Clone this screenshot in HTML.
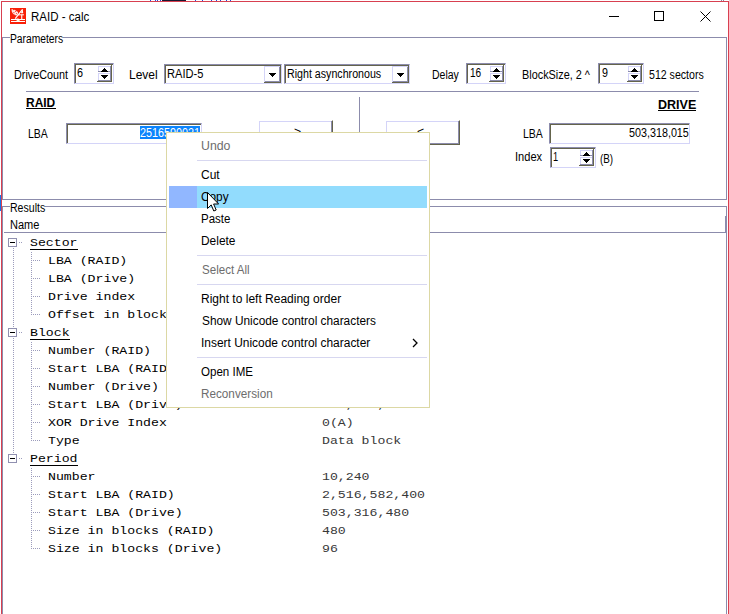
<!DOCTYPE html>
<html><head><meta charset="utf-8"><title>RAID - calc</title>
<style>
html,body{margin:0;padding:0;background:#fff;}
body{width:729px;height:614px;position:relative;overflow:hidden;font-family:"Liberation Sans",sans-serif;}
.abs{position:absolute;}
.ln{position:absolute;background:#8c8cac;}
.t{position:absolute;white-space:nowrap;font:12px/14px "Liberation Sans",sans-serif;color:#000;transform-origin:0 0;}
.sunk{position:absolute;background:#fff;border:1px solid;border-color:#8c8cac #d4d4f8 #d4d4f8 #8c8cac;box-shadow:inset 1px 1px 0 #64644c;}
.btn{position:absolute;background:#fff;border:1px solid;border-color:#d4d4f8 #64644c #64644c #d4d4f8;}
.pbtn{position:absolute;background:#fff;border:1px solid;border-color:#fff #64644c #64644c #fff;box-shadow:inset -1px -1px 0 #8c8cac, inset 1px 1px 0 #d4d4f8;width:73px;height:23px;}
.ttl{position:absolute;font:12px/16px "Liberation Sans",sans-serif;color:#000;white-space:nowrap;}
.m{position:absolute;transform-origin:0 0;font:12px/22px "Liberation Sans",sans-serif;color:#000;white-space:nowrap;height:22px;}
.m.d{color:#6d6d6d;}
.ms{position:absolute;left:197px;width:230px;height:1px;background:#d7d7f0;}
.tr{position:absolute;font:11.5px/18px "Liberation Mono",monospace;color:#000;white-space:pre;height:18px;transform:scaleX(1.148);transform-origin:0 0;}
.tv{position:absolute;left:322px;font:11.5px/18px "Liberation Mono",monospace;color:#383838;white-space:pre;height:18px;transform:scaleX(1.148);transform-origin:0 0;}
</style></head><body>

<div class="abs" style="left:1px;top:1px;width:728px;height:620px;border:1px solid #d84050;box-sizing:border-box;border-bottom:none"></div>
<div class="abs" style="left:0;top:195px;width:1px;height:16px;background:#1874e8"></div>
<div class="abs" style="left:162px;top:0;width:24px;height:1px;background:#181830"></div>
<div class="abs" style="left:150px;top:0;width:1px;height:1px;background:#2848d8"></div>
<div class="abs" style="left:155px;top:0;width:1px;height:1px;background:#2848d8"></div>
<div class="abs" style="left:157px;top:0;width:1px;height:1px;background:#2848d8"></div>
<div class="abs" style="left:160px;top:0;width:1px;height:1px;background:#2848d8"></div>
<div class="abs" style="left:195px;top:0;width:1px;height:1px;background:#2848d8"></div>
<div class="abs" style="left:202px;top:0;width:1px;height:1px;background:#2848d8"></div>
<div class="abs" style="left:211px;top:0;width:1px;height:1px;background:#2848d8"></div>
<div class="abs" style="left:216px;top:0;width:1px;height:1px;background:#2848d8"></div>
<div class="abs" style="left:220px;top:0;width:1px;height:1px;background:#2848d8"></div>
<div class="abs" style="left:226px;top:0;width:1px;height:1px;background:#2848d8"></div>
<div class="abs" style="left:230px;top:0;width:1px;height:1px;background:#2848d8"></div>
<div class="abs" style="left:721px;top:0;width:1px;height:1px;background:#8888a0"></div>
<div class="abs" style="left:723px;top:0;width:1px;height:1px;background:#8888a0"></div>
<svg class="abs" style="left:10px;top:8px" width="16" height="16" viewBox="0 0 16 16">
<rect width="16" height="16" fill="#f82008"/>
<g fill="#fff">
<rect x="1" y="11" width="14" height="1"/>
<rect x="1" y="13" width="14" height="1"/>
<path d="M6 11.6h4.2l-1 1.7h-2.2z" fill="#fffbe0"/>
<ellipse cx="7.6" cy="11.2" rx="1.7" ry="0.8"/>
<rect x="11.2" y="6.8" width="1.1" height="4.4"/>
<rect x="8" y="6.3" width="5.9" height="1"/>
<path d="M12.7 1.2l-1.9 4h2.4z"/>
<path d="M1.4 1.2h1.7v1l1.6-.4l1.7 1.1l1.6 1.2v2l-1.4 1.3l-2.1-.3l-1.6-1.6l-1-1.6z" opacity=".88"/>
</g>
<path d="M5.2 10.6L12.6 1.4" stroke="#fff" stroke-width="1.2" fill="none"/>
<g fill="#f82008"><circle cx="3.9" cy="4.6" r=".55"/><circle cx="5.6" cy="3.4" r=".5"/><circle cx="6.6" cy="5.6" r=".5"/><circle cx="10.6" cy="5.6" r=".55"/><circle cx="4.6" cy="6.2" r=".4"/></g>
</svg>
<div class="ttl" style="left:31.09px;top:9px;transform-origin:0 0;transform:scaleX(0.9592)">RAID - calc</div>
<svg class="abs" style="left:604px;top:6px" width="112" height="20" shape-rendering="crispEdges"><path d="M5 10.5h10" stroke="#000" fill="none"/><rect x="50.5" y="5.5" width="9" height="9" stroke="#000" fill="none"/><path d="M96.5 5.5l10 10M106.5 5.5l-10 10" stroke="#000" fill="none" shape-rendering="auto" stroke-width="1" stroke-linecap="butt"/></svg>
<div class="ln" style="left:2px;top:37px;width:8px;height:1px"></div>
<div class="ln" style="left:63px;top:37px;width:664px;height:1px"></div>
<div class="ln" style="left:2px;top:37px;width:1px;height:163px"></div>
<div class="ln" style="left:726px;top:37px;width:1px;height:163px"></div>
<div class="ln" style="left:2px;top:199px;width:725px;height:1px"></div>
<div class="ln" style="left:26px;top:91px;width:673px;height:1px"></div>
<div class="ln" style="left:359px;top:97px;width:1px;height:96px"></div>
<div class="sunk" style="left:74px;top:63px;width:38px;height:19px;"></div><svg class="abs" style="left:97px;top:65px" width="15" height="17" shape-rendering="crispEdges"><path d="M14.5 0V17M0 16.5H15" stroke="#64644c" fill="none"/><path d="M13.5 1V16M1 15.5H14M1 6.5H13" stroke="#8c8cac" fill="none"/><path d="M1 1.5H13M1 8.5H13M1.5 1V6M1.5 8V15" stroke="#d4d4f8" fill="none"/><path d="M7 3h1v1h1v1h1v1h1v1h-7v-1h1v-1h1v-1h1z" fill="#000"/><path d="M4 10h7v1h-1v1h-1v1h-1v1h-1v-1h-1v-1h-1v-1h-1z" fill="#000"/></svg>
<div class="sunk" style="left:164px;top:64px;width:116px;height:18px;"></div><svg class="abs" style="left:264px;top:66px" width="17" height="17" shape-rendering="crispEdges"><path d="M16.5 0V17M0 16.5H17" stroke="#64644c" fill="none"/><path d="M15.5 1V16M1 15.5H16" stroke="#8c8cac" fill="none"/><path d="M0 .5H16M.5 0V16" stroke="#d4d4f8" fill="none"/><path d="M5 7h7v1h-1v1h-1v1h-1v1h-1v-1h-1v-1h-1v-1h-1z" fill="#000"/></svg>
<div class="sunk" style="left:284px;top:64px;width:124px;height:18px;"></div><svg class="abs" style="left:392px;top:66px" width="17" height="17" shape-rendering="crispEdges"><path d="M16.5 0V17M0 16.5H17" stroke="#64644c" fill="none"/><path d="M15.5 1V16M1 15.5H16" stroke="#8c8cac" fill="none"/><path d="M0 .5H16M.5 0V16" stroke="#d4d4f8" fill="none"/><path d="M5 7h7v1h-1v1h-1v1h-1v1h-1v-1h-1v-1h-1v-1h-1z" fill="#000"/></svg>
<div class="sunk" style="left:466px;top:63px;width:38px;height:19px;"></div><svg class="abs" style="left:489px;top:65px" width="15" height="17" shape-rendering="crispEdges"><path d="M14.5 0V17M0 16.5H15" stroke="#64644c" fill="none"/><path d="M13.5 1V16M1 15.5H14M1 6.5H13" stroke="#8c8cac" fill="none"/><path d="M1 1.5H13M1 8.5H13M1.5 1V6M1.5 8V15" stroke="#d4d4f8" fill="none"/><path d="M7 3h1v1h1v1h1v1h1v1h-7v-1h1v-1h1v-1h1z" fill="#000"/><path d="M4 10h7v1h-1v1h-1v1h-1v1h-1v-1h-1v-1h-1v-1h-1z" fill="#000"/></svg>
<div class="sunk" style="left:598px;top:63px;width:44px;height:19px;"></div><svg class="abs" style="left:627px;top:65px" width="15" height="17" shape-rendering="crispEdges"><path d="M14.5 0V17M0 16.5H15" stroke="#64644c" fill="none"/><path d="M13.5 1V16M1 15.5H14M1 6.5H13" stroke="#8c8cac" fill="none"/><path d="M1 1.5H13M1 8.5H13M1.5 1V6M1.5 8V15" stroke="#d4d4f8" fill="none"/><path d="M7 3h1v1h1v1h1v1h1v1h-7v-1h1v-1h1v-1h1z" fill="#000"/><path d="M4 10h7v1h-1v1h-1v1h-1v1h-1v-1h-1v-1h-1v-1h-1z" fill="#000"/></svg>
<div class="sunk" style="left:66px;top:123px;width:134px;height:19px;"></div>
<div class="abs" style="left:140px;top:126px;width:60px;height:13px;background:#0c84fc"></div>
<div class="pbtn" style="left:258px;top:120px"></div>
<div class="pbtn" style="left:385px;top:120px"></div>
<div class="sunk" style="left:549px;top:123px;width:139px;height:19px;"></div>
<div class="sunk" style="left:550px;top:147px;width:44px;height:19px;"></div><svg class="abs" style="left:579px;top:149px" width="15" height="17" shape-rendering="crispEdges"><path d="M14.5 0V17M0 16.5H15" stroke="#64644c" fill="none"/><path d="M13.5 1V16M1 15.5H14M1 6.5H13" stroke="#8c8cac" fill="none"/><path d="M1 1.5H13M1 8.5H13M1.5 1V6M1.5 8V15" stroke="#d4d4f8" fill="none"/><path d="M7 3h1v1h1v1h1v1h1v1h-7v-1h1v-1h1v-1h1z" fill="#000"/><path d="M4 10h7v1h-1v1h-1v1h-1v1h-1v-1h-1v-1h-1v-1h-1z" fill="#000"/></svg>
<div class="abs" style="left:26px;top:108px;width:30px;height:1px;background:#000"></div>
<div class="abs" style="left:658px;top:110px;width:38px;height:1px;background:#000"></div>
<div class="ln" style="left:2px;top:206px;width:8px;height:1px"></div>
<div class="ln" style="left:45px;top:206px;width:682px;height:1px"></div>
<div class="ln" style="left:2px;top:206px;width:1px;height:420px"></div>
<div class="ln" style="left:726px;top:206px;width:1px;height:420px"></div>
<div class="ln" style="left:4px;top:232px;width:722px;height:1px"></div>
<div class="ln" style="left:725px;top:216px;width:1px;height:17px"></div>
<span class="t" style="left:10.19px;top:32px;transform:scaleX(0.8571)">Parameters</span>
<span class="t" style="left:14.15px;top:68px;transform:scaleX(0.8985)">DriveCount</span>
<span class="t" style="left:77.46px;top:66px;transform:scaleX(0.9009)">6</span>
<span class="t" style="left:129.05px;top:68px;transform:scaleX(1.0011)">Level</span>
<span class="t" style="left:167.12px;top:67px;transform:scaleX(0.9231)">RAID-5</span>
<span class="t" style="left:287.16px;top:67px;transform:scaleX(0.8882)">Right asynchronous</span>
<span class="t" style="left:432.17px;top:68px;transform:scaleX(0.8745)">Delay</span>
<span class="t" style="left:470.25px;top:66px;transform:scaleX(0.8387)">16</span>
<span class="t" style="left:522.14px;top:68px;transform:scaleX(0.9052)">BlockSize, 2 ^</span>
<span class="t" style="left:601.51px;top:66px;transform:scaleX(0.8929)">9</span>
<span class="t" style="left:648.60px;top:68px;transform:scaleX(0.8826)">512 sectors</span>
<span class="t" style="left:26.20px;top:96px;font-weight:bold;transform:scaleX(0.9976)">RAID</span>
<span class="t" style="left:658.16px;top:98px;font-weight:bold;transform:scaleX(1.0446)">DRIVE</span>
<span class="t" style="left:28.17px;top:127px;transform:scaleX(0.8745)">LBA</span>
<span class="t" style="left:140.46px;top:126px;color:#fff;transform:scaleX(0.8999)">2516590021</span>
<span class="t" style="left:523.17px;top:127px;transform:scaleX(0.8745)">LBA</span>
<span class="t" style="left:628.60px;top:126px;transform:scaleX(0.8965)">503,318,015</span>
<span class="t" style="left:514.98px;top:150px;transform:scaleX(0.9234)">Index</span>
<span class="t" style="left:553.31px;top:150px;transform:scaleX(0.7692)">1</span>
<span class="t" style="left:600.42px;top:152px;transform:scaleX(0.8219)">(B)</span>
<span class="t" style="left:10.16px;top:201px;transform:scaleX(0.8794)">Results</span>
<span class="t" style="left:10.13px;top:218px;transform:scaleX(0.9170)">Name</span>
<span class="t" style="left:294.44px;top:125px;transform:scaleX(1.0169)">&gt;</span>
<span class="t" style="left:417.44px;top:125px;transform:scaleX(1.0169)">&lt;</span>
<span class="tr" style="left:30px;top:234px">Sector</span><div class="abs" style="left:30px;top:249px;width:48px;height:1px;background:#000"></div>
<span class="tr" style="left:48px;top:252px">LBA (RAID)</span>
<span class="tv" style="top:252px">2,516,590,021</span>
<span class="tr" style="left:48px;top:270px">LBA (Drive)</span>
<span class="tv" style="top:270px">503,318,015</span>
<span class="tr" style="left:48px;top:288px">Drive index</span>
<span class="tv" style="top:288px">1(B)</span>
<span class="tr" style="left:48px;top:306px">Offset in block</span>
<span class="tv" style="top:306px">511</span>
<span class="tr" style="left:30px;top:324px">Block</span><div class="abs" style="left:30px;top:339px;width:40px;height:1px;background:#000"></div>
<span class="tr" style="left:48px;top:342px">Number (RAID)</span>
<span class="tv" style="top:342px">4,915,214</span>
<span class="tr" style="left:48px;top:360px">Start LBA (RAID)</span>
<span class="tv" style="top:360px">2,516,589,568</span>
<span class="tr" style="left:48px;top:378px">Number (Drive)</span>
<span class="tv" style="top:378px">983,042</span>
<span class="tr" style="left:48px;top:396px">Start LBA (Drive)</span>
<span class="tv" style="top:396px">503,317,504</span>
<span class="tr" style="left:48px;top:414px">XOR Drive Index</span>
<span class="tv" style="top:414px">0(A)</span>
<span class="tr" style="left:48px;top:432px">Type</span>
<span class="tv" style="top:432px">Data block</span>
<span class="tr" style="left:30px;top:450px">Period</span><div class="abs" style="left:30px;top:465px;width:48px;height:1px;background:#000"></div>
<span class="tr" style="left:48px;top:468px">Number</span>
<span class="tv" style="top:468px">10,240</span>
<span class="tr" style="left:48px;top:486px">Start LBA (RAID)</span>
<span class="tv" style="top:486px">2,516,582,400</span>
<span class="tr" style="left:48px;top:504px">Start LBA (Drive)</span>
<span class="tv" style="top:504px">503,316,480</span>
<span class="tr" style="left:48px;top:522px">Size in blocks (RAID)</span>
<span class="tv" style="top:522px">480</span>
<span class="tr" style="left:48px;top:540px">Size in blocks (Drive)</span>
<span class="tv" style="top:540px">96</span>
<svg class="abs" style="left:0;top:233px" width="60" height="340" shape-rendering="crispEdges"><g stroke="#9c9cbc" stroke-width="1" stroke-dasharray="1 1" fill="none"><path d="M13.5 15V95"/><path d="M13.5 105V221"/><path d="M19 9.5H23"/><path d="M31.5 19V82"/><path d="M33 27.5H41"/><path d="M33 45.5H41"/><path d="M33 63.5H41"/><path d="M33 81.5H41"/><path d="M19 99.5H23"/><path d="M31.5 109V208"/><path d="M33 117.5H41"/><path d="M33 135.5H41"/><path d="M33 153.5H41"/><path d="M33 171.5H41"/><path d="M33 189.5H41"/><path d="M33 207.5H41"/><path d="M19 225.5H23"/><path d="M31.5 235V316"/><path d="M33 243.5H41"/><path d="M33 261.5H41"/><path d="M33 279.5H41"/><path d="M33 297.5H41"/><path d="M33 315.5H41"/></g><rect x="8.5" y="5.5" width="8" height="8" fill="#fff" stroke="#9090b0"/><path d="M10 9.5h5" stroke="#000"/><rect x="8.5" y="95.5" width="8" height="8" fill="#fff" stroke="#9090b0"/><path d="M10 99.5h5" stroke="#000"/><rect x="8.5" y="221.5" width="8" height="8" fill="#fff" stroke="#9090b0"/><path d="M10 225.5h5" stroke="#000"/></svg>
<div class="abs" style="left:166px;top:132px;width:262px;height:274px;background:#fff;border:1px solid #dcd8a4"></div>
<div class="abs" style="left:169px;top:186px;width:28px;height:22px;background:#91b7ff"></div>
<div class="abs" style="left:197px;top:186px;width:230px;height:22px;background:#92dcfd"></div>
<div class="m d" style="left:201.08px;top:135px;transform:scaleX(1.0251)">Undo</div>
<div class="m" style="left:201.40px;top:164px;transform:scaleX(1.0006)">Cut</div>
<div class="m" style="left:201.41px;top:186px;transform:scaleX(0.9849)">Copy</div>
<div class="m" style="left:201.09px;top:208px;transform:scaleX(0.9585)">Paste</div>
<div class="m" style="left:201.06px;top:230px;transform:scaleX(0.9936)">Delete</div>
<div class="m d" style="left:201.52px;top:259px;transform:scaleX(0.9640)">Select All</div>
<div class="m" style="left:201.05px;top:288px;transform:scaleX(1.0005)">Right to left Reading order</div>
<div class="m" style="left:201.51px;top:310px;transform:scaleX(0.9875)">Show Unicode control characters</div>
<div class="m" style="left:200.91px;top:332px;transform:scaleX(0.9954)">Insert Unicode control character</div>
<div class="m" style="left:201.47px;top:361px;transform:scaleX(0.9628)">Open IME</div>
<div class="m d" style="left:201.07px;top:383px;transform:scaleX(0.9770)">Reconversion</div>
<div class="ms" style="top:160px"></div>
<div class="ms" style="top:255px"></div>
<div class="ms" style="top:284px"></div>
<div class="ms" style="top:357px"></div>
<svg class="abs" style="left:411px;top:338px" width="8" height="10"><path d="M2 1l4 4l-4 4" stroke="#000" fill="none" stroke-width="1.3"/></svg>
<svg class="abs" style="left:206px;top:191px" width="14" height="22" viewBox="0 0 14 22"><path d="M1.5 1.5v16l3.7-3.6l2.6 6.1l2.4-1l-2.6-6h5z" fill="#fff" stroke="#000" stroke-width="1" stroke-linejoin="miter"/></svg>
</body></html>
